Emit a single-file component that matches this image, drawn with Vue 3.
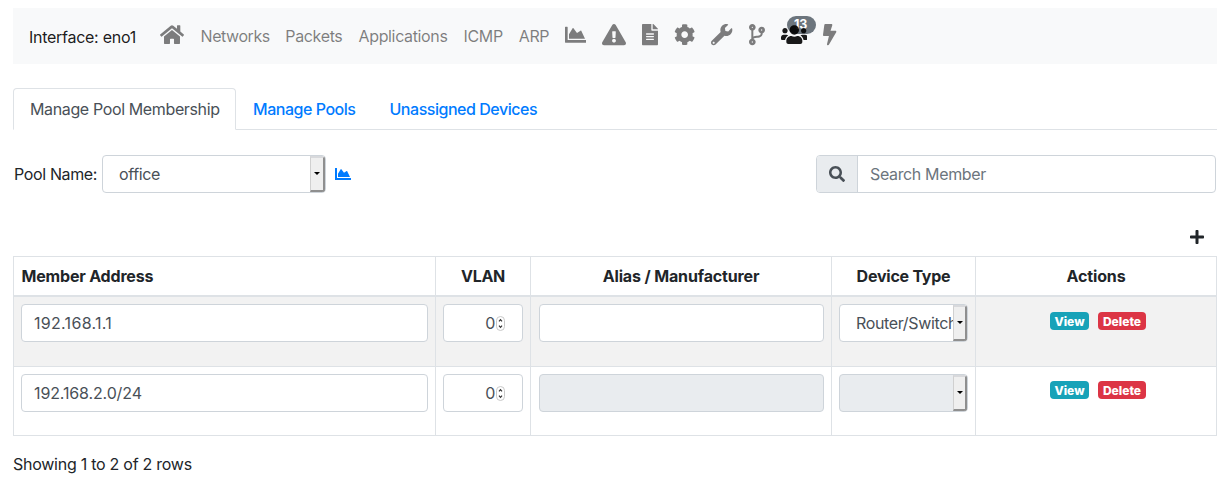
<script setup>
const icons = {
  home: { w: 576, d: 'M280.37 148.26L96 300.11V464a16 16 0 0 0 16 16l112.06-.29a16 16 0 0 0 15.92-16V368a16 16 0 0 1 16-16h64a16 16 0 0 1 16 16v95.64a16 16 0 0 0 16 16.05L464 480a16 16 0 0 0 16-16V300L295.67 148.26a12.19 12.19 0 0 0-15.3 0zM571.6 251.47L488 182.56V44.05a12 12 0 0 0-12-12h-56a12 12 0 0 0-12 12v72.61L318.47 43a48 48 0 0 0-61 0L4.34 251.47a12 12 0 0 0-1.6 16.9l25.5 31A12 12 0 0 0 45.15 301l235.22-193.74a12.19 12.19 0 0 1 15.3 0L530.9 301a12 12 0 0 0 16.9-1.6l25.5-31a12 12 0 0 0-1.7-16.93z' },
  chart: { w: 512, d: 'M500 384c6.6 0 12 5.4 12 12v40c0 6.6-5.4 12-12 12H12c-6.6 0-12-5.4-12-12V76c0-6.6 5.4-12 12-12h40c6.6 0 12 5.4 12 12v308h436zM372.7 159.5L288 216l-85.3-113.7c-5.1-6.8-15.5-6.3-19.9 1L96 248v104h384l-89.9-187.8c-3.2-6.5-11.4-8.7-17.4-4.7z' },
  warning: { w: 576, d: 'M569.517 440.013C587.975 472.007 564.806 512 527.94 512H48.054c-36.937 0-59.999-40.055-41.577-71.987L246.423 23.985c18.467-32.009 64.72-31.951 83.154 0l239.94 416.028zM288 354c-25.405 0-46 20.595-46 46s20.595 46 46 46 46-20.595 46-46-20.595-46-46-46zm-43.673-165.346l7.418 136c.347 6.364 5.609 11.346 11.982 11.346h48.546c6.373 0 11.635-4.982 11.982-11.346l7.418-136c.375-6.874-5.098-12.654-11.982-12.654h-63.383c-6.884 0-12.356 5.78-11.981 12.654z' },
  file: { w: 384, d: 'M224 136V0H24C10.7 0 0 10.7 0 24v464c0 13.3 10.7 24 24 24h336c13.3 0 24-10.7 24-24V160H248c-13.2 0-24-10.8-24-24zm64 236c0 6.6-5.4 12-12 12H108c-6.6 0-12-5.4-12-12v-8c0-6.6 5.4-12 12-12h168c6.6 0 12 5.4 12 12v8zm0-64c0 6.6-5.4 12-12 12H108c-6.6 0-12-5.4-12-12v-8c0-6.6 5.4-12 12-12h168c6.6 0 12 5.4 12 12v8zm0-72v8c0 6.6-5.4 12-12 12H108c-6.6 0-12-5.4-12-12v-8c0-6.6 5.4-12 12-12h168c6.6 0 12 5.4 12 12zm96-114.1v6.1H256V0h6.1c6.4 0 12.5 2.5 17 7l97.9 98c4.5 4.5 7 10.6 7 16.9z' },
  cog: { w: 512, d: 'M487.4 315.7l-42.6-24.6c4.3-23.2 4.3-47 0-70.2l42.6-24.6c4.9-2.8 7.1-8.6 5.5-14-11.1-35.6-30-67.8-54.7-94.6-3.8-4.1-10-5.1-14.8-2.3L380.8 110c-17.9-15.4-38.5-27.3-60.8-35.1V25.8c0-5.6-3.9-10.5-9.4-11.7-36.7-8.2-74.3-7.8-109.2 0-5.5 1.2-9.4 6.1-9.4 11.7V75c-22.2 7.9-42.8 19.8-60.8 35.1L88.7 85.5c-4.9-2.8-11-1.9-14.8 2.3-24.7 26.7-43.6 58.9-54.7 94.6-1.7 5.4.6 11.2 5.5 14L67.3 221c-4.3 23.2-4.3 47 0 70.2l-42.6 24.6c-4.9 2.8-7.1 8.6-5.5 14 11.1 35.6 30 67.8 54.7 94.6 3.8 4.1 10 5.1 14.8 2.3l42.6-24.6c17.9 15.4 38.5 27.3 60.8 35.1v49.2c0 5.6 3.9 10.5 9.4 11.7 36.7 8.2 74.3 7.8 109.2 0 5.5-1.2 9.4-6.1 9.4-11.7v-49.2c22.2-7.9 42.8-19.8 60.8-35.1l42.6 24.6c4.9 2.8 11 1.9 14.8-2.3 24.7-26.7 43.6-58.9 54.7-94.6 1.5-5.5-.7-11.3-5.6-14.1zM256 336c-44.1 0-80-35.9-80-80s35.9-80 80-80 80 35.9 80 80-35.9 80-80 80z' },
  wrench: { w: 512, d: 'M507.73 109.1c-2.24-9.03-13.54-12.09-20.12-5.51l-74.36 74.36-67.88-11.31-11.31-67.88 74.36-74.36c6.62-6.62 3.43-17.9-5.66-20.16-47.38-11.74-99.55.91-136.58 37.93-39.64 39.64-50.55 97.1-34.05 147.2L18.74 402.76c-24.99 24.99-24.99 65.51 0 90.5 24.99 24.99 65.51 24.99 90.5 0l213.21-213.21c50.12 16.71 107.47 5.68 147.37-34.22 37.07-37.07 49.7-89.32 37.91-136.73zM64 472c-13.25 0-24-10.75-24-24 0-13.26 10.75-24 24-24s24 10.74 24 24c0 13.25-10.75 24-24 24z' },
  branch: { w: 384, d: 'M384 144c0-44.2-35.8-80-80-80s-80 35.8-80 80c0 36.4 24.3 67.1 57.5 76.8-.6 16.1-4.2 28.5-11 36.9-15.4 19.2-49.3 22.4-85.2 25.7-28.2 2.6-57.4 5.4-81.3 16.9v-144c32.5-10.2 56-40.5 56-76.3 0-44.2-35.8-80-80-80S0 35.8 0 80c0 35.8 23.5 66.1 56 76.3v199.3C23.5 365.9 0 396.2 0 432c0 44.2 35.8 80 80 80s80-35.8 80-80c0-34-21.2-63.1-51.2-74.6 3.1-5.2 7.8-9.8 14.9-13.4 16.2-8.2 40.4-10.4 66.1-12.8 42.2-3.9 90-8.4 118.2-43.4 14-17.4 21.1-39.8 21.6-67.9 31.6-10.8 54.4-40.7 54.4-75.9zM80 64c8.8 0 16 7.2 16 16s-7.2 16-16 16-16-7.2-16-16 7.2-16 16-16zm0 384c-8.8 0-16-7.2-16-16s7.2-16 16-16 16 7.2 16 16-7.2 16-16 16zm224-320c8.8 0 16 7.2 16 16s-7.2 16-16 16-16-7.2-16-16 7.2-16 16-16z' },
  users: { w: 640, d: 'M96 224c35.3 0 64-28.7 64-64s-28.7-64-64-64-64 28.7-64 64 28.7 64 64 64zm448 0c35.3 0 64-28.7 64-64s-28.7-64-64-64-64 28.7-64 64 28.7 64 64 64zm32 32h-64c-17.6 0-33.5 7.1-45.1 18.6 40.3 22.1 68.9 62 75.1 109.4h66c17.7 0 32-14.3 32-32v-32c0-35.3-28.7-64-64-64zm-256 0c61.9 0 112-50.1 112-112S381.9 32 320 32 208 82.1 208 144s50.1 112 112 112zm76.8 32h-8.3c-20.8 10-43.9 16-68.5 16s-47.6-6-68.5-16h-8.3C179.6 288 128 339.6 128 403.2V432c0 26.5 21.5 48 48 48h288c26.5 0 48-21.5 48-48v-28.8c0-63.6-51.6-115.2-115.2-115.2zm-223.7-13.4C161.5 263.1 145.6 256 128 256H64c-35.3 0-64 28.7-64 64v32c0 17.7 14.3 32 32 32h65.9c6.3-47.4 34.9-87.3 75.2-109.4z' },
  bolt: { w: 320, d: 'M296 160H180.6l42.6-129.8C227.2 15 215.7 0 200 0H56C44 0 33.8 8.9 32.2 20.8l-32 240C-1.7 275.2 9.5 288 24 288h118.7L96.6 482.5c-3.6 15.2 8 29.5 23.3 29.5 8.4 0 16.4-4.4 20.8-12l176-304c9.3-15.9-2.2-36-20.7-36z' },
  search: { w: 512, d: 'M505 442.7L405.3 343c-4.5-4.5-10.6-7-17-7H372c27.6-35.3 44-79.7 44-128C416 93.1 322.9 0 208 0S0 93.1 0 208s93.1 208 208 208c48.3 0 92.7-16.4 128-44v16.3c0 6.4 2.5 12.5 7 17l99.7 99.7c9.4 9.4 24.6 9.4 33.9 0l28.3-28.3c9.4-9.4 9.4-24.6.1-34zM208 336c-70.7 0-128-57.2-128-128 0-70.7 57.2-128 128-128 70.7 0 128 57.2 128 128 0 70.7-57.2 128-128 128z' },
  plus: { w: 448, d: 'M416 208H272V64c0-17.67-14.33-32-32-32h-32c-17.67 0-32 14.33-32 32v144H32c-17.67 0-32 14.33-32 32v32c0 17.67 14.33 32 32 32h144v144c0 17.67 14.33 32 32 32h32c17.67 0 32-14.33 32-32V304h144c17.67 0 32-14.33 32-32v-32c0-17.67-14.33-32-32-32z' },
}
const box = (name) => `0 0 ${icons[name].w} 512`

const links = [
  { text: 'Networks', cls: 'networks' },
  { text: 'Packets', cls: 'packets' },
  { text: 'Applications', cls: 'applications' },
  { text: 'ICMP', cls: 'icmp' },
  { text: 'ARP', cls: 'arp' },
]
const tools = ['chart', 'warning', 'file', 'cog', 'wrench', 'branch', 'users', 'bolt']
const rows = [
  { address: '192.168.1.1', vlan: 0, type: 'Router/Switch', disabled: false, cls: 'host' },
  { address: '192.168.2.0/24', vlan: 0, type: '', disabled: true, cls: 'subnet' },
]
</script>

<template>
  <div class="page">
    <nav class="navbar">
      <span class="brand">Interface: eno1</span>
      <a class="nav-item home"><svg class="icon lg" :viewBox="box('home')"><path :d="icons.home.d" /></svg></a>
      <a v-for="l in links" :key="l.text" class="nav-item" :class="l.cls">{{ l.text }}</a>
      <a v-for="t in tools" :key="t" class="nav-item" :class="{ active: t === 'users' }">
        <span v-if="t === 'users'" class="count">13</span>
        <svg class="icon lg" :viewBox="box(t)"><path :d="icons[t].d" /></svg>
      </a>
    </nav>

    <div class="tabs">
      <a class="tab current">Manage Pool Membership</a>
      <a class="tab">Manage Pools</a>
      <a class="tab">Unassigned Devices</a>
    </div>

    <div class="toolbar">
      <label class="pool-label">Pool Name:</label>
      <div class="control select pool-select">
        <span class="value">office</span>
        <span class="arrow"></span>
      </div>
      <svg class="icon link-chart" :viewBox="box('chart')"><path :d="icons.chart.d" /></svg>
      <div class="search">
        <span class="addon"><svg class="icon" :viewBox="box('search')"><path :d="icons.search.d" /></svg></span>
        <span class="placeholder">Search Member</span>
      </div>
    </div>

    <div class="add-row">
      <svg class="icon" :viewBox="box('plus')"><path :d="icons.plus.d" /></svg>
    </div>

    <table class="members">
      <thead>
        <tr>
          <th class="c-address">Member Address</th>
          <th class="c-vlan">VLAN</th>
          <th class="c-alias">Alias / Manufacturer</th>
          <th class="c-type">Device Type</th>
          <th class="c-actions">Actions</th>
        </tr>
      </thead>
      <tbody>
        <tr v-for="r in rows" :key="r.address">
          <td><div class="control" :class="r.cls">{{ r.address }}</div></td>
          <td>
            <div class="control number">
              <span>{{ r.vlan }}</span>
              <svg class="spinner" viewBox="0 0 9 15">
                <rect x=".5" y=".5" width="8" height="14" rx="4" />
                <path d="M3 5.3L4.5 3.6L6 5.3M3 9.7L4.5 11.4L6 9.7" />
              </svg>
            </div>
          </td>
          <td class="alias"><div class="control" :class="{ disabled: r.disabled }"></div></td>
          <td>
            <div class="control select" :class="{ disabled: r.disabled }">
              <span class="value">{{ r.type }}</span>
              <span class="arrow"></span>
            </div>
          </td>
          <td>
            <div class="actions">
              <span class="badge view">View</span>
              <span class="badge delete">Delete</span>
            </div>
          </td>
        </tr>
      </tbody>
    </table>

    <div class="summary">Showing 1 to 2 of 2 rows</div>
  </div>
</template>

<style>
body {
  margin: 0;
  background: #fff;
}
</style>

<style scoped>
.page {
  box-sizing: border-box;
  width: 1227px;
  height: 482px;
  padding: 8px 10px 0 13px;
  overflow: hidden;
  font: 16px/24px Inter, "Liberation Sans", sans-serif;
  letter-spacing: -0.36px;
  color: #212529;
  white-space: nowrap;
}
.icon {
  display: block;
  height: 16px;
  fill: currentColor;
}
.icon.lg {
  height: 21.33px;
}
.navbar {
  display: flex;
  align-items: center;
  height: 56px;
  padding-left: 16px;
  background: #f8f9fa;
}
.brand {
  width: 123.2px;
  padding-top: 2px;
  letter-spacing: -0.27px;
  color: rgba(0, 0, 0, 0.9);
}
.nav-item {
  position: relative;
  padding: 0 8px;
  color: rgba(0, 0, 0, 0.5);
}
.nav-item.active {
  color: rgba(0, 0, 0, 0.9);
}
.nav-item .icon {
  position: relative;
  margin-top: -2px;
}
.home { margin-right: 0.4px; }
.networks {
  width: 68.8px;
  letter-spacing: -0.45px;
}
.packets { width: 57.2px; }
.applications { width: 89px; }
.icmp { width: 39.2px; }
.arp { width: 30px; }
.count {
  position: absolute;
  left: 14px;
  top: -10px;
  width: 28px;
  height: 18px;
  padding-right: 1px;
  border-radius: 9px;
  background: #6c757d;
  color: #fff;
  font-size: 12.5px;
  font-weight: 700;
  line-height: 18px;
  letter-spacing: 0;
  text-align: center;
}
.tabs {
  display: flex;
  height: 41px;
  margin-top: 24px;
  border-bottom: 1px solid #dee2e6;
}
.tab {
  box-sizing: border-box;
  height: 42px;
  padding: 9px 17px 0;
  color: #007bff;
  font-weight: 500;
  letter-spacing: -0.47px;
}
.tab.current {
  width: 223px;
  padding: 8px 16px 0;
  border: 1px solid #dee2e6;
  border-bottom-color: #fff;
  border-radius: 4px 4px 0 0;
  background: #fff;
  color: #495057;
  font-weight: 400;
  letter-spacing: -0.37px;
}
.tab:nth-child(2) { width: 136.5px; }
.toolbar {
  display: flex;
  align-items: center;
  height: 38px;
  margin-top: 25px;
  padding-right: 1px;
}
.pool-label {
  width: 88px;
  padding-left: 1px;
}
.control {
  box-sizing: border-box;
  height: 38px;
  padding: 6px 12px;
  border: 1px solid #ced4da;
  border-radius: 4px;
  background: #fff;
  color: #495057;
}
.control.disabled {
  background: #e9ecef;
}
.control.host { letter-spacing: 0.3px; }
.control.subnet { letter-spacing: -0.13px; }
.select {
  position: relative;
  padding: 6px 14px 6px 16px;
  overflow: hidden;
}
.value {
  display: block;
  overflow: hidden;
  height: 24px;
}
.arrow {
  position: absolute;
  top: 0;
  right: 0;
  bottom: 0;
  box-sizing: border-box;
  width: 14.5px;
  border: 2px solid #8f8f8f;
  border-top-color: #d8d9dc;
  border-left: 1px solid #d0d0d0;
  background: #efefef;
}
.arrow::after {
  content: "";
  position: absolute;
  left: 3px;
  top: 14px;
  border: 3px solid transparent;
  border-top: 3.5px solid #000;
  border-bottom: 0;
}
.pool-select {
  width: 223.5px;
}
.link-chart {
  margin-left: 9px;
  color: #007bff;
}
.search {
  display: flex;
  box-sizing: border-box;
  width: 400px;
  height: 38px;
  margin-left: auto;
  border: 1px solid #ced4da;
  border-radius: 4px;
  overflow: hidden;
}
.addon {
  display: flex;
  align-items: center;
  width: 28px;
  padding-left: 12px;
  border-right: 1px solid #ced4da;
  background: #e9ecef;
  color: #495057;
}
.placeholder {
  padding: 6px 12px;
  color: #6c757d;
}
.add-row {
  display: flex;
  justify-content: flex-end;
  height: 27px;
  margin-top: 36px;
  padding-right: 13px;
}
.members {
  width: 1204px;
  border: solid #dee2e6;
  border-width: 1px 0 0 1px;
  border-spacing: 0;
  table-layout: fixed;
}
th,
td {
  box-sizing: border-box;
  padding: 0 7px;
  border: solid #dee2e6;
  border-width: 0 1px 1px 0;
}
th {
  height: 40px;
  border-bottom-width: 2px;
  font-weight: 700;
  letter-spacing: -0.14px;
  text-align: center;
}
td {
  height: 69px;
  padding-top: 7px;
  vertical-align: top;
}
tbody tr:first-child td {
  height: 70px;
  background: #f2f2f2;
}
.c-address {
  width: 422px;
  padding-left: 7.5px;
  letter-spacing: -0.18px;
  text-align: left;
}
.c-vlan {
  width: 95px;
  letter-spacing: -0.3px;
}
.c-alias { width: 301px; }
.c-type {
  width: 144px;
  letter-spacing: -0.24px;
}
.c-actions { width: 241px; }
.alias { padding-left: 8px; }
.number {
  display: flex;
  align-items: center;
  justify-content: flex-end;
  padding-right: 17px;
}
.spinner {
  width: 9px;
  height: 15px;
  margin-left: 1px;
}
.spinner rect {
  fill: #fff;
  stroke: #c8c8c8;
}
.spinner path {
  fill: none;
  stroke: #333;
  stroke-width: 1.2;
}
.actions {
  display: flex;
  justify-content: center;
  gap: 9px;
  padding: 8px 0 0 4px;
}
tbody tr:last-child .actions {
  padding-top: 7px;
}
.badge {
  height: 18px;
  border-radius: 4px;
  color: #fff;
  font-size: 12px;
  font-weight: 800;
  line-height: 19px;
  letter-spacing: 0;
  text-align: center;
}
.view {
  width: 39px;
  background: #17a2b8;
}
.delete {
  width: 48px;
  background: #dc3545;
}
.summary {
  margin-top: 16px;
  letter-spacing: -0.26px;
}
</style>
